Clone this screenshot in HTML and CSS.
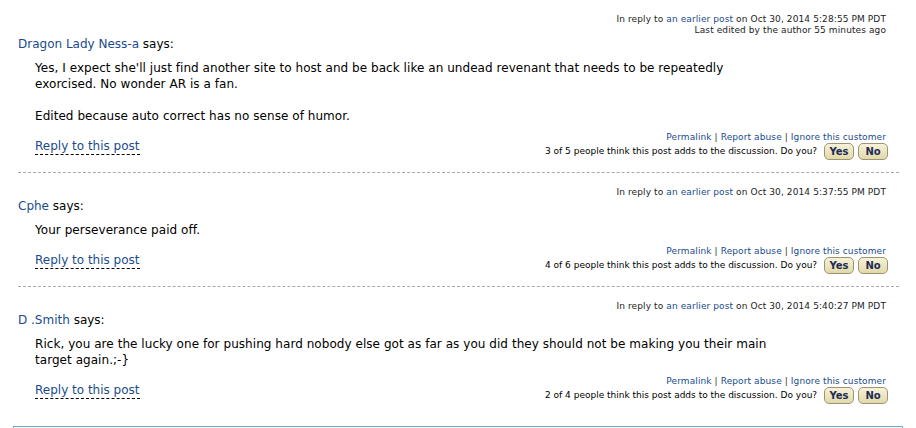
FILE: index.html
```html
<!DOCTYPE html>
<html lang="en">
  <head>
    <meta charset="UTF-8" />
    <meta name="viewport" content="width=device-width, initial-scale=1.0" />
    <title>Discussion</title>
    <link rel="stylesheet" href="styles.css">
  </head>

  <body>
    <div class="thread">
      <div class="post">
        <div class="meta">
          In reply to <a href="#">an earlier post</a> on Oct 30, 2014 5:28:55 PM PDT<br />
          Last edited by the author 55 minutes ago
        </div>
        <div class="author"><a href="#">Dragon Lady Ness-a</a> says:</div>
        <div class="text">
          <p>Yes, I expect she'll just find another site to host and be back like an undead revenant that needs to be repeatedly exorcised. No wonder AR is a fan.</p>
          <p>Edited because auto correct has no sense of humor.</p>
        </div>
        <div class="footer">
          <a class="reply" href="#">Reply to this post</a>
          <div class="actions">
            <div class="links"><a href="#">Permalink</a> | <a href="#">Report abuse</a> | <a href="#">Ignore this customer</a></div>
            <div class="vote">3 of 5 people think this post adds to the discussion. Do you? <button>Yes</button><button>No</button></div>
          </div>
        </div>
      </div>

      <div class="post">
        <div class="meta">
          In reply to <a href="#">an earlier post</a> on Oct 30, 2014 5:37:55 PM PDT
        </div>
        <div class="author"><a href="#">Cphe</a> says:</div>
        <div class="text">
          <p>Your perseverance paid off.</p>
        </div>
        <div class="footer">
          <a class="reply" href="#">Reply to this post</a>
          <div class="actions">
            <div class="links"><a href="#">Permalink</a> | <a href="#">Report abuse</a> | <a href="#">Ignore this customer</a></div>
            <div class="vote">4 of 6 people think this post adds to the discussion. Do you? <button>Yes</button><button>No</button></div>
          </div>
        </div>
      </div>

      <div class="post last">
        <div class="meta">
          In reply to <a href="#">an earlier post</a> on Oct 30, 2014 5:40:27 PM PDT
        </div>
        <div class="author"><a href="#">D .Smith</a> says:</div>
        <div class="text">
          <p>Rick, you are the lucky one for pushing hard nobody else got as far as you did they should not be making you their main target again.;-}</p>
        </div>
        <div class="footer">
          <a class="reply" href="#">Reply to this post</a>
          <div class="actions">
            <div class="links"><a href="#">Permalink</a> | <a href="#">Report abuse</a> | <a href="#">Ignore this customer</a></div>
            <div class="vote">2 of 4 people think this post adds to the discussion. Do you? <button>Yes</button><button>No</button></div>
          </div>
        </div>
      </div>
    </div>

    <div class="reply-box"><span class="tab"></span></div>
  </body>
</html>
```

FILE: styles.css
```css
body {
  margin: 0;
  font-family: "DejaVu Sans", Verdana, sans-serif;
  color: #000;
  background: #fff;
}

a {
  color: #1a4b8c;
  text-decoration: none;
}

.thread {
  margin: 0 17px 0 18px;
}

.post {
  padding: 14px 13px 12px 0;
  border-bottom: 1px dashed #aaa;
}

.post.last {
  border-bottom: none;
}

.meta {
  text-align: right;
  font-size: 9px;
  line-height: 11px;
  letter-spacing: 0.1px;
  color: #222;
}

.author {
  font-size: 12px;
  line-height: 16px;
}

.text {
  margin: 8px 0 0 17px;
  max-width: 745px;
  font-size: 12px;
  line-height: 16px;
  letter-spacing: 0.05px;
}

.text p {
  margin: 0 0 16px;
}

.text p:last-child {
  margin-bottom: 0;
}

.footer {
  display: flex;
  justify-content: space-between;
  align-items: center;
  margin-top: 8px;
  padding-left: 17px;
}

.reply {
  font-size: 12px;
  line-height: 16px;
  border-bottom: 1px dashed #000;
}

.actions {
  text-align: right;
  font-size: 9px;
  line-height: 11px;
  color: #333;
}

.links {
  letter-spacing: 0.1px;
}

.vote {
  color: #000;
  line-height: 17px;
  margin-right: -2px;
}

.vote button {
  font-family: inherit;
  font-size: 10px;
  font-weight: bold;
  color: #1d2b55;
  width: 30px;
  height: 17px;
  padding: 0;
  margin-left: 4px;
  border: 1px solid #9c9574;
  border-radius: 5px;
  background: linear-gradient(#f7f2d8, #e2d9aa);
  vertical-align: middle;
}

.reply-box {
  margin: 10px 13px 0 13px;
  height: 20px;
  border: 1px solid #6ea9c9;
  border-bottom: none;
  position: relative;
}

.tab {
  position: absolute;
  left: 611px;
  top: 1px;
  width: 29px;
  height: 2px;
  background: #c8701e;
}
```
